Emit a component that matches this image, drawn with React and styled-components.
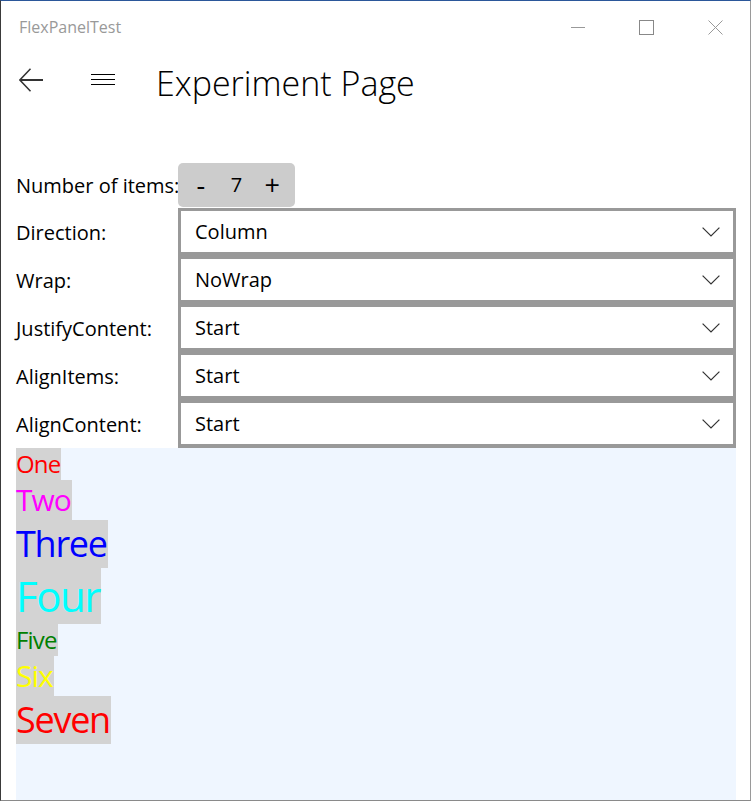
import React from "react";
import styled, { createGlobalStyle } from "styled-components";

const GlobalStyle = createGlobalStyle`
  html, body {
    margin: 0;
    padding: 0;
    background: #ffffff;
  }
  body {
    font-family: "Open Sans", "Noto Sans", "Liberation Sans", sans-serif;
    color: #000000;
  }
`;

const Window = styled.div`
  box-sizing: border-box;
  width: 751px;
  height: 801px;
  display: flex;
  flex-direction: column;
  overflow: hidden;
  background: #ffffff;
  border-top: 1px solid #2b579a;
  border-left: 1px solid #3a3a3a;
  border-right: 1px solid #9a9a9a;
  border-bottom: 1px solid #8a8a8a;
`;

const TitleBar = styled.div`
  height: 52px;
  display: flex;
  align-items: center;
  flex-shrink: 0;
`;

const AppName = styled.span`
  padding-left: 18px;
  font-size: 16px;
  color: #999999;
`;

const Captions = styled.div`
  margin-left: auto;
  display: flex;
  height: 100%;
`;

const CaptionButton = styled.div`
  width: 69px;
  display: flex;
  align-items: center;
  justify-content: center;
`;

const Header = styled.div`
  margin-top: 3px;
  height: 48px;
  display: flex;
  align-items: center;
  padding-left: 6px;
  flex-shrink: 0;
`;

const NavButton = styled.div`
  width: 48px;
  height: 48px;
  display: flex;
  align-items: center;
  justify-content: center;
  margin-right: ${({ gap }) => gap || 0}px;
`;

const PageTitle = styled.h1`
  margin: 5px 0 0 29px;
  font-size: 34px;
  font-weight: 300;
  line-height: 48px;
  color: #000000;
`;

const Form = styled.div`
  margin-top: 59px;
  padding: 0 14px 0 15px;
  display: grid;
  grid-template-columns: 162px 1fr;
  grid-template-rows: 45px repeat(5, 48px);
  flex-shrink: 0;
`;

const Label = styled.div`
  font-size: 20px;
  align-self: center;
  white-space: nowrap;
`;

const Stepper = styled.div`
  box-sizing: border-box;
  width: 117px;
  height: 44px;
  padding: 0 5px;
  display: flex;
  align-items: center;
  background: #cccccc;
  border-radius: 5px;
  align-self: start;
`;

const StepCell = styled.span`
  width: 36px;
  text-align: center;
  font-size: ${({ big }) => (big ? 27 : 20)}px;
  line-height: 44px;
`;

const Combo = styled.div`
  box-sizing: border-box;
  height: 48px;
  display: flex;
  align-items: center;
  padding: 0 13px 0 14px;
  border: 3px solid #999999;
  border-bottom-width: 4px;
  background: #ffffff;
  font-size: 20px;
`;

const ComboValue = styled.span`
  flex: 1;
`;

const FlexArea = styled.div`
  flex: 1;
  margin: 0 14px 0 15px;
  background: #eff6ff;
  display: flex;
  flex-direction: column;
  align-items: flex-start;
`;

const Item = styled.div`
  background: #d3d3d3;
  color: ${({ color }) => color};
  font-size: ${({ size }) => size}px;
  line-height: ${({ size }) => Math.round((size * 4) / 3)}px;
  letter-spacing: -0.035em;
  padding-right: 1px;
  white-space: nowrap;
`;

const BackIcon = () => (
  <svg width="24" height="24" viewBox="0 0 24 24">
    <path d="M24 12H1.5" stroke="#333" strokeWidth="2" fill="none" />
    <path d="M11.5 0.8L0.9 12L11.5 23.2" stroke="#333" strokeWidth="1.5" fill="none" />
  </svg>
);

const MenuIcon = () => (
  <svg width="24" height="24" viewBox="0 0 24 24">
    <path d="M0 6.5H24M0 11.5H24M0 16.5H24" stroke="#000" strokeWidth="1" fill="none" />
  </svg>
);

const Chevron = () => (
  <svg width="18" height="10" viewBox="0 0 18 10">
    <path d="M0.6 0.6L9 9L17.4 0.6" stroke="#333" strokeWidth="1.2" fill="none" />
  </svg>
);

const MinimizeIcon = () => (
  <svg width="14" height="14" viewBox="0 0 14 14">
    <path d="M0 7.5H14" stroke="#999" strokeWidth="1" />
  </svg>
);

const MaximizeIcon = () => (
  <svg width="15" height="15" viewBox="0 0 15 15">
    <rect x="0.5" y="0.5" width="14" height="14" stroke="#888" strokeWidth="1" fill="none" />
  </svg>
);

const CloseIcon = () => (
  <svg width="15" height="15" viewBox="0 0 15 15">
    <path d="M0.5 0.5L14.5 14.5M14.5 0.5L0.5 14.5" stroke="#999" strokeWidth="1" fill="none" />
  </svg>
);

const options = [
  { label: "Direction:", value: "Column" },
  { label: "Wrap:", value: "NoWrap" },
  { label: "JustifyContent:", value: "Start" },
  { label: "AlignItems:", value: "Start" },
  { label: "AlignContent:", value: "Start" },
];

const items = [
  { text: "One", color: "#ff0000", size: 24 },
  { text: "Two", color: "#ff00ff", size: 30 },
  { text: "Three", color: "#0000ff", size: 36 },
  { text: "Four", color: "#00ffff", size: 42 },
  { text: "Five", color: "#008000", size: 24 },
  { text: "Six", color: "#ffff00", size: 30 },
  { text: "Seven", color: "#ff0000", size: 36 },
];

export default function App() {
  return (
    <>
      <GlobalStyle />
      <Window>
        <TitleBar>
          <AppName>FlexPanelTest</AppName>
          <Captions>
            <CaptionButton>
              <MinimizeIcon />
            </CaptionButton>
            <CaptionButton>
              <MaximizeIcon />
            </CaptionButton>
            <CaptionButton>
              <CloseIcon />
            </CaptionButton>
          </Captions>
        </TitleBar>

        <Header>
          <NavButton gap={24}>
            <BackIcon />
          </NavButton>
          <NavButton>
            <MenuIcon />
          </NavButton>
          <PageTitle>Experiment Page</PageTitle>
        </Header>

        <Form>
          <Label>Number of items:</Label>
          <Stepper>
            <StepCell big>-</StepCell>
            <StepCell>7</StepCell>
            <StepCell big>+</StepCell>
          </Stepper>
          {options.map((opt) => (
            <React.Fragment key={opt.label}>
              <Label>{opt.label}</Label>
              <Combo>
                <ComboValue>{opt.value}</ComboValue>
                <Chevron />
              </Combo>
            </React.Fragment>
          ))}
        </Form>

        <FlexArea>
          {items.map((it) => (
            <Item key={it.text} color={it.color} size={it.size}>
              {it.text}
            </Item>
          ))}
        </FlexArea>
      </Window>
    </>
  );
}
